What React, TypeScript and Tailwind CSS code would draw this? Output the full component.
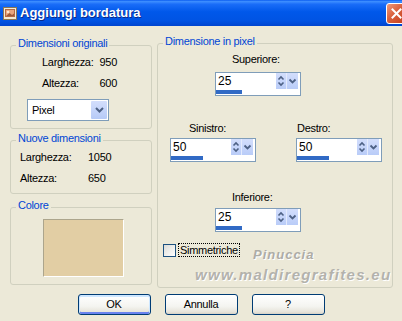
import React from "react";

function Group({
  title,
  className,
  children,
}: {
  title: string;
  className: string;
  children?: React.ReactNode;
}) {
  return (
    <div className={`relative border border-[#D0D0BF] rounded-[3px] ${className}`}>
      <span className="absolute top-[-9px] left-[5px] px-[2px] bg-[#ECE9D8] text-[#0046D5] leading-[13px] whitespace-nowrap">
        {title}
      </span>
      {children}
    </div>
  );
}

function SpinBox({ value, barClass }: { value: string; barClass: string }) {
  return (
    <div className="w-[86px] h-[24px] border border-[#7F9DB9] bg-white flex flex-col">
      <div className="h-[16px] flex items-center">
        <span className="flex-1 pl-[2px] text-[12px] leading-[16px] tracking-[0px]">{value}</span>
        <div className="w-[10px] h-[16px] bg-[linear-gradient(to_bottom,#D3DEFC,#B9CCF8)]">
          <svg width="10" height="16" viewBox="0 0 10 16">
            <path d="M2.5 6.5 L5 4 L7.5 6.5" fill="none" stroke="#4D6185" strokeWidth="1.6" />
            <path d="M2.5 9.5 L5 12 L7.5 9.5" fill="none" stroke="#4D6185" strokeWidth="1.6" />
          </svg>
        </div>
        <div className="w-[12px] h-[16px] bg-[linear-gradient(to_bottom,#D3DEFC,#B9CCF8)] border-l border-[#E4EBFD]">
          <svg width="11" height="16" viewBox="0 0 11 16">
            <path d="M2.5 6.5 L5.5 9.5 L8.5 6.5" fill="none" stroke="#4D6185" strokeWidth="1.8" />
          </svg>
        </div>
        <div className="w-[2px]" />
      </div>
      <div className="pt-[1px]">
        <div className={`h-[4px] bg-[#316AC5] ${barClass}`} />
      </div>
    </div>
  );
}

function XPButton({ label, def }: { label: string; def?: boolean }) {
  return (
    <div
      className={`w-[73px] h-[21px] border border-[#003C74] rounded-[3px] flex items-center justify-center bg-[linear-gradient(to_bottom,#FFFFFF_0%,#F4F4F0_60%,#E6E3D9_90%,#D6D0C5_100%)] ${
        def ? "shadow-[inset_0_1px_0_1px_#CEE7FF,inset_0_-1px_0_1px_#6982EE]" : ""
      }`}
    >
      <span className="leading-[13px]">{label}</span>
    </div>
  );
}

export default function App() {
  return (
    <div className="relative w-[402px] h-[321px] overflow-hidden bg-[#ECE9D8] text-black text-[11px] tracking-[-0.3px] font-['Liberation_Sans',Arial,sans-serif]">
      {/* Title bar */}
      <div className="h-[26px] flex items-center bg-[linear-gradient(to_bottom,#0A5CF0_0%,#3D8EFF_6%,#1A6DF8_16%,#0058EA_45%,#0053E3_80%,#0045CF_100%)]">
        <div className="ml-[3px] w-[15px] h-[15px]">
          <svg width="15" height="15" viewBox="0 0 15 15">
            <rect x="0.5" y="1.5" width="13" height="12" fill="#F3E9D4" stroke="#8A7655" />
            <rect x="2.5" y="3.5" width="9" height="7" fill="#E9A57C" stroke="#B36A44" />
            <circle cx="5" cy="6" r="1.3" fill="#FBE7D0" />
            <path d="M3 10 L6.5 7 L9 9 L11 7.5 L11 10 Z" fill="#9C5A3A" />
          </svg>
        </div>
        <span className="ml-[2px] text-white font-bold text-[13px] tracking-[0px] leading-[16px] [text-shadow:1px_1px_0_#0A2A8A]">
          Aggiungi bordatura
        </span>
        <div className="ml-auto mr-[-5px] w-[21px] h-[21px] rounded-[3px] border border-white flex items-center justify-center bg-[linear-gradient(135deg,#EE9A7C_0%,#D9603C_45%,#C23C1A_100%)]">
          <svg width="13" height="13" viewBox="0 0 13 13">
            <path d="M2.5 2.5 L10.5 10.5 M10.5 2.5 L2.5 10.5" stroke="white" strokeWidth="2" strokeLinecap="square" />
          </svg>
        </div>
      </div>

      {/* Body */}
      <div className="flex items-start">
        {/* Left column */}
        <div className="ml-[10px] w-[142px] flex flex-col">
          <Group title="Dimensioni originali" className="mt-[19px] h-[84px]">
            <div className="pt-[10px] pl-[31px] flex flex-col">
              <div className="flex leading-[13px]">
                <span className="w-[55px]">Larghezza:</span>
                <span className="w-[20px] text-right">950</span>
              </div>
              <div className="mt-[8px] flex leading-[13px]">
                <span className="w-[55px]">Altezza:</span>
                <span className="w-[20px] text-right">600</span>
              </div>
            </div>
            <div className="mt-[9px] ml-[16px] w-[82px] h-[22px] border border-[#7F9DB9] bg-white flex items-center p-[1px]">
              <span className="flex-1 pl-[3px] leading-[13px]">Pixel</span>
              <div className="w-[16px] h-[18px] rounded-[1px] bg-[linear-gradient(to_bottom,#D3DEFC,#B6CAF7)] flex items-center justify-center">
                <svg width="11" height="8" viewBox="0 0 11 8">
                  <path d="M2 2 L5.5 5.5 L9 2" fill="none" stroke="#4D6185" strokeWidth="2" />
                </svg>
              </div>
            </div>
          </Group>

          <Group title="Nuove dimensioni" className="mt-[11px] h-[54px]">
            <div className="pt-[10px] pl-[9px] flex flex-col">
              <div className="flex leading-[13px]">
                <span className="w-[68px]">Larghezza:</span>
                <span>1050</span>
              </div>
              <div className="mt-[8px] flex leading-[13px]">
                <span className="w-[68px]">Altezza:</span>
                <span>650</span>
              </div>
            </div>
          </Group>

          <Group title="Colore" className="mt-[13px] h-[78px]">
            <div className="mt-[11px] ml-[32px] w-[81px] h-[58px] bg-[#E2CEA4] border border-t-[#ACA58C] border-l-[#ACA58C] border-b-white border-r-white" />
          </Group>
        </div>

        {/* Right group */}
        <Group title="Dimensione in pixel" className="ml-[5px] mt-[17px] w-[236px] h-[245px]">
          <div className="flex flex-col">
            <span className="mt-[9px] ml-[74px] leading-[13px]">Superiore:</span>
            <div className="mt-[6px] ml-[57px]">
              <SpinBox value="25" barClass="w-[26px]" />
            </div>

            <div className="mt-[26px] flex leading-[13px]">
              <span className="ml-[31px] w-[108px]">Sinistro:</span>
              <span>Destro:</span>
            </div>
            <div className="mt-[3px] flex">
              <div className="ml-[12px]">
                <SpinBox value="50" barClass="w-[32px]" />
              </div>
              <div className="ml-[40px]">
                <SpinBox value="50" barClass="w-[32px]" />
              </div>
            </div>

            <span className="mt-[29px] ml-[74px] leading-[13px]">Inferiore:</span>
            <div className="mt-[4px] ml-[57px]">
              <SpinBox value="25" barClass="w-[26px]" />
            </div>

            <div className="mt-[11px] ml-[5px] flex items-center">
              <div className="w-[13px] h-[13px] border border-[#1C5180] bg-[linear-gradient(135deg,#DCDCD7,#FFFFFF)]" />
              <span className="ml-[2px] px-[1px] border border-dotted border-black leading-[12px]">
                Simmetriche
              </span>
            </div>
          </div>
        </Group>
      </div>

      {/* Buttons */}
      <div className="mt-[6px] flex justify-center gap-[14px]">
        <XPButton label="OK" def />
        <XPButton label="Annulla" />
        <XPButton label="?" />
      </div>

      {/* Watermark */}
      <span className="absolute left-[253px] top-[247px] text-[13px] font-bold italic tracking-[1px] leading-[16px] text-[#ADACA6] [text-shadow:1px_1px_0_#FFFFFF]">
        Pinuccia
      </span>
      <span className="absolute left-[195px] top-[266px] text-[15px] font-bold italic tracking-[1.3px] leading-[18px] text-[#B3B2AC] [text-shadow:1px_1px_0_#FFFFFF]">
        www.maldiregrafites.eu
      </span>
    </div>
  );
}
